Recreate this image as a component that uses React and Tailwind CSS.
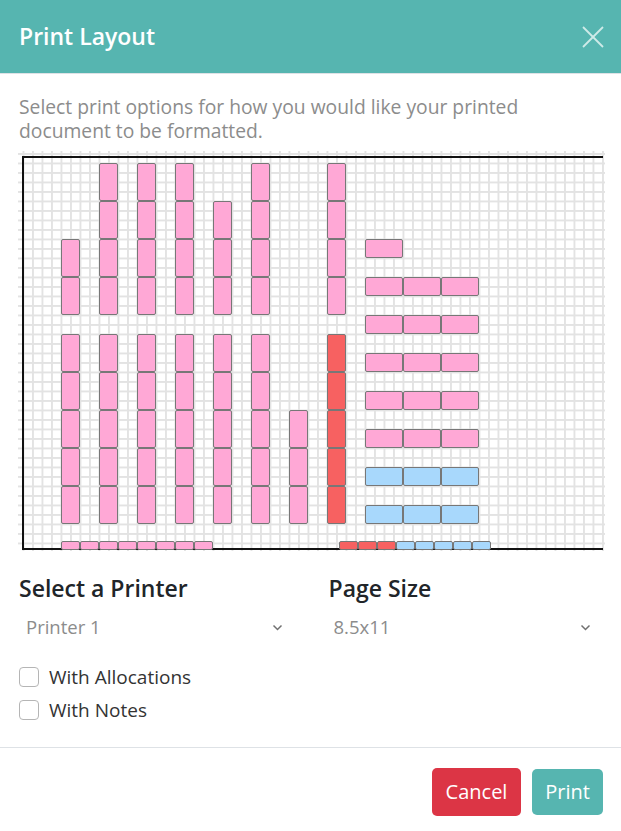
import React from 'react';

const U = 9.5;
const ox = 4.5;
const oy = 2;

const PINK = 'bg-[#ffa8d6]';
const RED = 'bg-[#f76161]';
const BLUE = 'bg-[#a8d8fc]';

function buildBlocks() {
    const blocks = [];
    // vertical columns: grid column k, rows of the upper part, rows + colour of the lower part
    const cols = [
        { k: 4, top: [9, 13], bottom: [19, 23, 27, 31, 35], bc: PINK },
        { k: 8, top: [1, 5, 9, 13], bottom: [19, 23, 27, 31, 35], bc: PINK },
        { k: 12, top: [1, 5, 9, 13], bottom: [19, 23, 27, 31, 35], bc: PINK },
        { k: 16, top: [1, 5, 9, 13], bottom: [19, 23, 27, 31, 35], bc: PINK },
        { k: 20, top: [5, 9, 13], bottom: [19, 23, 27, 31, 35], bc: PINK },
        { k: 24, top: [1, 5, 9, 13], bottom: [19, 23, 27, 31, 35], bc: PINK },
        { k: 28, top: [], bottom: [27, 31, 35], bc: PINK },
        { k: 32, top: [1, 5, 9, 13], bottom: [19, 23, 27, 31, 35], bc: RED },
    ];
    cols.forEach(c => {
        c.top.forEach(j => blocks.push({ x: ox + c.k * U, y: oy + j * U, w: 2 * U, h: 4 * U, c: PINK }));
        c.bottom.forEach(j => blocks.push({ x: ox + c.k * U, y: oy + j * U, w: 2 * U, h: 4 * U, c: c.bc }));
    });
    // horizontal rows on the right
    const rows = [
        { j: 9, n: 1, c: PINK },
        { j: 13, n: 3, c: PINK },
        { j: 17, n: 3, c: PINK },
        { j: 21, n: 3, c: PINK },
        { j: 25, n: 3, c: PINK },
        { j: 29, n: 3, c: PINK },
        { j: 33, n: 3, c: BLUE },
        { j: 37, n: 3, c: BLUE },
    ];
    rows.forEach(r => {
        for (let i = 0; i < r.n; i++) {
            blocks.push({ x: ox + (36 + i * 4) * U, y: oy + r.j * U, w: 4 * U, h: 2 * U, c: r.c });
        }
    });
    // small strip along the bottom edge
    for (let i = 0; i < 8; i++) blocks.push({ x: ox + (4 + i * 2) * U, y: 390, w: 2 * U, h: 8.5, c: PINK });
    for (let i = 0; i < 3; i++) blocks.push({ x: 321.3 + i * U * 2, y: 390, w: 2 * U, h: 8.5, c: RED });
    for (let i = 0; i < 5; i++) blocks.push({ x: 321.3 + (3 + i) * U * 2, y: 390, w: 2 * U, h: 8.5, c: BLUE });
    return blocks;
}

const blocks = buildBlocks();

function Chevron() {
    return (
        <svg width="11" height="7" viewBox="0 0 11 7" className="shrink-0">
            <polyline points="1.5,1.5 5.5,5.5 9.5,1.5" fill="none" stroke="#707070" strokeWidth="1.5" />
        </svg>
    );
}

function LayoutGrid() {
    return (
        <div className="relative ml-[-1px] mt-2 h-[400px] w-[587px] bg-white bg-[linear-gradient(to_right,#e3e3e3_1.5px,transparent_1.5px),linear-gradient(to_bottom,#e3e3e3_1.5px,transparent_1.5px)] bg-[size:9.5px_9.5px] bg-[position:4.5px_2px]">
            {/* frame */}
            <div className="absolute left-[4px] top-[5px] h-[394px] w-[581px] border-t-2 border-b-2 border-l-2 border-[#111]" />
            {blocks.map((b, i) => (
                <div
                    key={i}
                    className={`absolute rounded-[2px] border border-[#777] ${b.c}`}
                    style={{ left: b.x, top: b.y, width: b.w, height: b.h }}
                />
            ))}
        </div>
    );
}

export default function App() {
    return (
        <div className="w-[621px] h-[831px] bg-white font-['Open_Sans','Noto_Sans',sans-serif] text-[#212529]">
            <div className="flex h-[74px] items-center justify-between border-b border-[#dee2e6] bg-[#56b5b0] px-[19px]">
                <h1 className="text-[23px] font-semibold text-white">Print Layout</h1>
                <svg width="22" height="22" viewBox="0 0 22 22" className="mr-[-2px]">
                    <line x1="1" y1="1" x2="21" y2="21" stroke="#cfeae8" strokeWidth="1.8" />
                    <line x1="21" y1="1" x2="1" y2="21" stroke="#cfeae8" strokeWidth="1.8" />
                </svg>
            </div>

            <div className="px-[19px] pt-[21px]">
                <p className="text-[19.3px] leading-[24px] text-[#8c8c8c]">
                    Select print options for how you would like your printed document to be formatted.
                </p>

                <LayoutGrid />

                <div className="mt-[22px] grid grid-cols-2 gap-[36px]">
                    <div>
                        <h2 className="text-[23px] font-semibold leading-[30px]">Select a Printer</h2>
                        <div className="mt-[6px] flex h-[36px] items-center justify-between pl-[7px] pr-[10px] text-[18.5px] text-[#8c8c8c]">
                            <span>Printer 1</span>
                            <Chevron />
                        </div>
                    </div>
                    <div>
                        <h2 className="text-[23px] font-semibold leading-[30px]">Page Size</h2>
                        <div className="mt-[6px] flex h-[36px] items-center justify-between pl-[5px] pr-[11px] text-[18.5px] text-[#8c8c8c]">
                            <span>8.5x11</span>
                            <Chevron />
                        </div>
                    </div>
                </div>

                <div className="mt-[22px] flex flex-col gap-[13px]">
                    <label className="flex items-center gap-[10px] text-[19px] leading-[20px] text-[#333]">
                        <span className="h-[20px] w-[20px] rounded-[4px] border border-[#b5b5b5] bg-white" />
                        With Allocations
                    </label>
                    <label className="flex items-center gap-[10px] text-[19px] leading-[20px] text-[#333]">
                        <span className="h-[20px] w-[20px] rounded-[4px] border border-[#b5b5b5] bg-white" />
                        With Notes
                    </label>
                </div>
            </div>

            <div className="mt-[27px] flex justify-end gap-[11px] border-t border-[#dee2e6] px-[18px] pt-[20px]">
                <button className="h-[48px] w-[89px] rounded-[5px] bg-[#dc3545] text-[20px] text-white">Cancel</button>
                <button className="mt-[1px] h-[46px] w-[71px] rounded-[5px] bg-[#56b5b0] text-[20px] text-white">Print</button>
            </div>
        </div>
    );
}
